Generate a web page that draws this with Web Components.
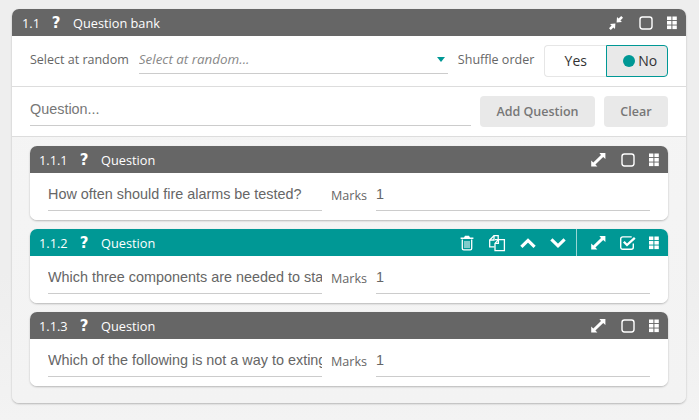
<!doctype html>
<html><head><meta charset="utf-8"><title>Question bank</title>
<style>
html,body{margin:0;padding:0;height:420px;overflow:hidden}
html{background:#eee}
body{background:linear-gradient(#eee 65%,#f3f3f3);font-family:"Open Sans",sans-serif;color:#666;padding:9px 13px 0 12px;box-sizing:border-box;width:699px}
</style></head><body>
<q-bank>
  <q-question num="1.1.1" text="How often should fire alarms be tested?"></q-question>
  <q-question num="1.1.2" active text="Which three components are needed to start a fire?"></q-question>
  <q-question num="1.1.3" text="Which of the following is not a way to extinguish a fire?"></q-question>
</q-bank>
<script>
const ICONS={
 shrink:'<svg width="16" height="16" viewBox="0 0 16 16"><path fill="#fff" d="M15 2.800 13.200 1 10.600 3.600 9 2 8.600 7.400 14 7 12.400 5.400ZM1 13.200 2.800 15 5.400 12.400 7 14 7.400 8.600 2 9 3.600 10.600Z"/></svg>',
 expand:'<svg width="16" height="16" viewBox="0 0 16 16"><path fill="#fff" d="M9.400 1H15.400V7L13.200 4.900 5.400 12.400 7.400 14.600H1.200V8.600L3.300 10.600 11 3Z"/></svg>',
 box:'<svg width="16" height="16" viewBox="0 0 16 16"><rect x="2" y="2" width="12" height="12" rx="2.400" fill="none" stroke="#fff" stroke-width="1.400"/></svg>',
 check:'<svg width="18" height="16" viewBox="0 0 18 16"><path fill="none" stroke="#fff" stroke-width="1.400" d="M14.300 8.500V12.300a2 2 0 0 1-2 2H3.700a2 2 0 0 1-2-2V3.900a2 2 0 0 1 2-2h9"/><path fill="none" stroke="#fff" stroke-width="2.300" d="M4.800 6.800 8 10 15.800 2.800"/></svg>',
 grid:'<svg width="12" height="16" viewBox="0 0 12 16"><g fill="#fff"><rect x="1" y="1.500" width="4.400" height="3.600"/><rect x="6.400" y="1.500" width="4.400" height="3.600"/><rect x="1" y="6" width="4.400" height="3.600"/><rect x="6.400" y="6" width="4.400" height="3.600"/><rect x="1" y="10.500" width="4.400" height="3.600"/><rect x="6.400" y="10.500" width="4.400" height="3.600"/></g></svg>',
 trash:'<svg width="14" height="16" viewBox="0 0 14 16"><path fill="#fff" d="M5 .8h4L10 2.400h3.400v1.500H.6V2.400H4Z"/><path fill="none" stroke="#fff" stroke-width="1.300" d="M2.300 4.400V13.400A1.400 1.400 0 0 0 3.700 14.800H10.300A1.400 1.400 0 0 0 11.700 13.400V4.400"/><path stroke="#fff" d="M5 6v7M7 6v7M9 6v7"/></svg>',
 copy:'<svg width="18" height="18" viewBox="0 0 18 18"><g fill="none" stroke="#fff" stroke-width="1.300"><path d="M6.500 12.800H1.700V6L6 1.700H10.200V5"/><path d="M6 1.700V6H1.700"/><path d="M7 5.600H16.400V16.600H7V9.400L10.400 5.600"/><path d="M10.400 5.600V9.400H7"/></g></svg>',
 up:'<svg width="16" height="12" viewBox="0 0 16 12"><path fill="none" stroke="#fff" stroke-width="3.200" d="M1.400 9.800 8 3.400 14.600 9.800"/></svg>',
 down:'<svg width="16" height="12" viewBox="0 0 16 12"><path fill="none" stroke="#fff" stroke-width="3.200" d="M1.400 2.400 8 8.800 14.600 2.400"/></svg>'
};
const tpl=(html)=>{const t=document.createElement('template');t.innerHTML=html;return t;};

const barT=tpl(`<style>
:host{display:flex;align-items:center;height:27px;border-radius:7px 7px 0 0;background:var(--bar,#666);color:#fff;font:12.75px/27px "Open Sans",sans-serif;padding-left:var(--pad,10px)}
.n{width:var(--nw,34px);padding-top:1px}
.q{font:bold 15px/27px "DejaVu Sans",sans-serif;width:10px;text-align:center;margin-right:12px;padding-top:1px}
.t{flex:1;padding-top:1px}
.tools{display:flex;align-items:center;height:27px}
</style><span class="n" id="n"></span><span class="q">?</span><span class="t" id="t"></span><span class="tools"><slot></slot></span>`);
class QBar extends HTMLElement{
 static get observedAttributes(){return ['num','label'];}
 constructor(){super();this.attachShadow({mode:'open'}).append(barT.content.cloneNode(true));}
 attributeChangedCallback(a,o,v){this.shadowRoot.getElementById(a==='num'?'n':'t').textContent=v;}
}
customElements.define('q-bar',QBar);

class QIcon extends HTMLElement{
 constructor(){super();const s=this.attachShadow({mode:'open'});s.innerHTML=`<style>:host{display:flex;align-items:center;justify-content:center;height:27px;width:var(--w,20px);margin-left:var(--ml,0)}svg{display:block}</style>`;}
 connectedCallback(){this.shadowRoot.innerHTML+=ICONS[this.getAttribute('name')];}
}
customElements.define('q-icon',QIcon);

const lineT=tpl(`<style>
:host{display:block;box-sizing:border-box;border-bottom:1px solid #ccc;overflow:hidden;white-space:nowrap;color:#666}
</style><slot></slot>`);
class QLine extends HTMLElement{constructor(){super();this.attachShadow({mode:'open'}).append(lineT.content.cloneNode(true));}}
customElements.define('q-line',QLine);

const toggleT=tpl(`<style>
:host{display:flex;width:124px;height:32px;box-sizing:border-box;font:14px/30px "Open Sans",sans-serif;color:#333}
div{box-sizing:border-box;height:32px;display:flex;align-items:center;justify-content:center}
.y{width:62px;background:#fff;border:1px solid #e6e6e6;border-right:0;border-radius:4px 0 0 4px}
.n{width:62px;background:#e9e9e9;border:1px solid #009895;border-radius:0 4px 4px 0;padding-left:6px}
i{display:block;width:12px;height:12px;border-radius:50%;background:#009895;margin-right:3px}
</style><div class="y">Yes</div><div class="n"><i></i>No</div>`);
class QToggle extends HTMLElement{constructor(){super();this.attachShadow({mode:'open'}).append(toggleT.content.cloneNode(true));}}
customElements.define('q-toggle',QToggle);

const btnT=tpl(`<style>
:host{display:flex;align-items:center;justify-content:center;box-sizing:border-box;height:31px;background:#e9e9e9;border-radius:4px;color:#777;font:600 12.5px "Open Sans",sans-serif}
</style><slot></slot>`);
class QBtn extends HTMLElement{constructor(){super();this.attachShadow({mode:'open'}).append(btnT.content.cloneNode(true));}}
customElements.define('q-btn',QBtn);

const bankT=tpl(`<style>
:host{display:block;width:674px;height:394px;box-sizing:border-box;background:linear-gradient(#f5f5f5,#f3f3f3);border-radius:7px;box-shadow:0 1px 2px rgba(0,0,0,.25)}
.r1,.r2{background:#fff;display:flex;align-items:flex-start;padding:0 18px;}
.r1{height:50px;border-bottom:1px solid #ddd}
.r2{height:49px;border-bottom:1px solid #ddd}
.lab{font-size:12.5px;line-height:18px;color:#666;margin-top:15px;white-space:nowrap;flex:none}
.sel{width:309px;flex:none;margin-left:10px;height:29px;margin-top:9px;display:flex;font:italic 13.4px/28px "Open Sans",sans-serif;color:#888;position:relative}
.sel q-line{flex:1;height:29px;color:#888}
.arrow{position:absolute;right:3px;top:12px;width:0;height:0;border:4.5px solid transparent;border-top:5px solid #009895;border-bottom:0}
.shuffle{margin-left:10px;margin-right:10px}
q-toggle{margin-top:9px;flex:none}
.qi{width:441px;height:30px;margin-top:9px;font:14.4px/27px "Liberation Sans",sans-serif;color:#777}
q-btn.a{width:115px;margin-left:9px;margin-top:9px}
q-btn.c{width:64px;margin-left:9px;margin-top:9px}
.list{display:flex;flex-direction:column;gap:9px;padding:9px 18px 0}
</style>
<q-bar num="1.1" label="Question bank" style="--nw:29px;--pad:10px">
 <q-icon name="shrink" style="--w:16px"></q-icon>
 <q-icon name="box" style="--w:16px;--ml:14px"></q-icon>
 <q-icon name="grid" style="--w:12px;--ml:12px;margin-right:8px"></q-icon>
</q-bar>
<div class="r1">
 <span class="lab">Select at random</span>
 <div class="sel"><q-line>Select at random...</q-line><span class="arrow"></span></div>
 <span class="lab shuffle">Shuffle order</span>
 <q-toggle></q-toggle>
</div>
<div class="r2">
 <q-line class="qi">Question...</q-line>
 <q-btn class="a">Add Question</q-btn>
 <q-btn class="c">Clear</q-btn>
</div>
<div class="list"><slot></slot></div>`);
class QBank extends HTMLElement{constructor(){super();this.attachShadow({mode:'open'}).append(bankT.content.cloneNode(true));}}
customElements.define('q-bank',QBank);

const qT=tpl(`<style>
:host{display:block;border-radius:7px;box-shadow:0 1px 2px rgba(0,0,0,.25);background:#fff}
.body{display:flex;height:47px;padding:0 18px;border-radius:0 0 7px 7px;background:#fff}
.txt{width:274px;height:38px;font:14.4px/43px "Liberation Sans",sans-serif;color:#666}
.m{font:12.6px/18px "Open Sans",sans-serif;color:#666;margin:14px 9px 0 9px;white-space:nowrap}
.val{flex:1;height:38px;font:14.4px/43px "Liberation Sans",sans-serif}
</style>
<q-bar id="bar" label="Question" style="--pad:9px;--nw:40px"></q-bar>
<div class="body"><q-line class="txt" id="txt"></q-line><span class="m">Marks</span><q-line class="val">1</q-line></div>`);
class QQuestion extends HTMLElement{
 constructor(){super();this.attachShadow({mode:'open'}).append(qT.content.cloneNode(true));}
 connectedCallback(){
  const r=this.shadowRoot,bar=r.getElementById('bar'),act=this.hasAttribute('active');
  bar.setAttribute('num',this.getAttribute('num'));
  r.getElementById('txt').textContent=this.getAttribute('text');
  if(act)bar.style.setProperty('--bar','#009895');
  const add=(n,st)=>{const i=document.createElement('q-icon');i.setAttribute('name',n);i.style.cssText=st;bar.append(i);};
  if(act){
   add('trash','--w:14px');
   add('copy','--w:18px;--ml:14px');
   add('up','--w:16px;--ml:14px');
   add('down','--w:16px;--ml:14px');
   const s=document.createElement('span');s.style.cssText='width:1px;height:27px;background:rgba(255,255,255,.6);margin-left:10px';bar.append(s);
  }
  add('expand',`--w:16px;--ml:${act?13:0}px`);
  add(act?'check':'box',act?'--w:18px;--ml:13px':'--w:16px;--ml:14px');
  add('grid',`--w:12px;--ml:${act?11:12}px;margin-right:8px`);
 }
}
customElements.define('q-question',QQuestion);
</script>
</body></html>
